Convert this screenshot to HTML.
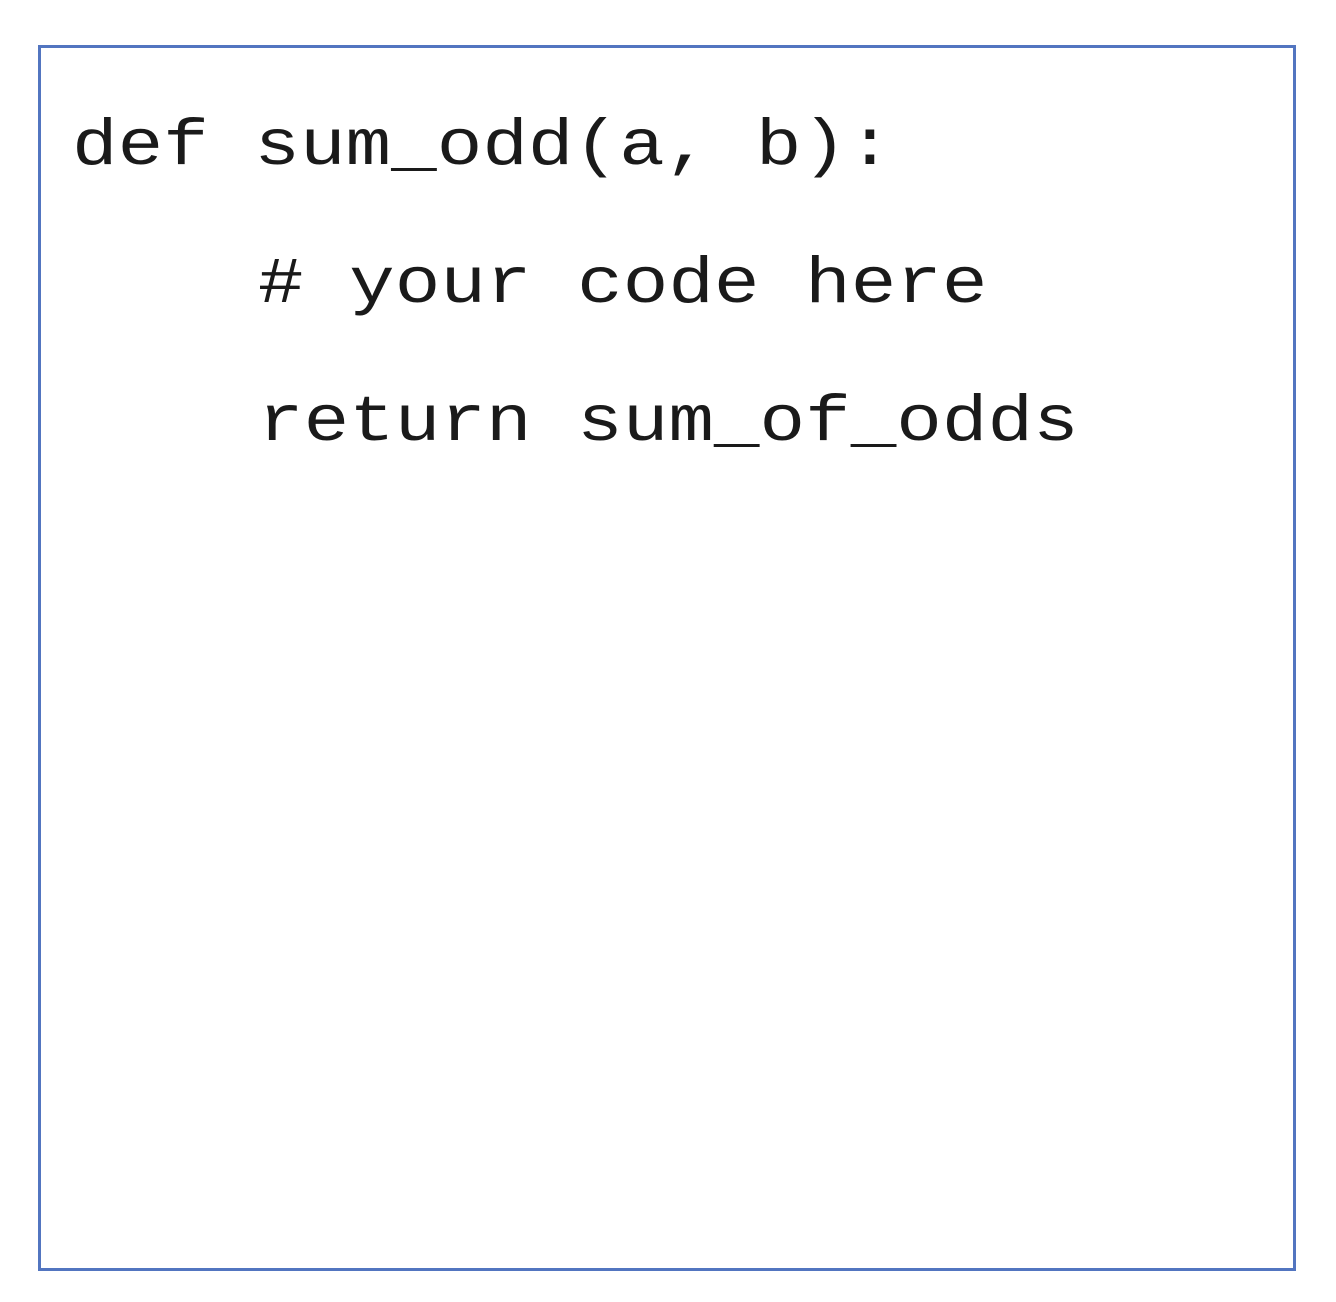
<!DOCTYPE html>
<html><head><style>
html,body{margin:0;padding:0;background:#fff;width:1336px;height:1302px;overflow:hidden}
</style></head><body>
<svg width="1336" height="1302" xmlns="http://www.w3.org/2000/svg">
<rect x="39.5" y="46.5" width="1255" height="1223" fill="#fff" stroke="#5275c0" stroke-width="3"/>
<g font-family="'Liberation Mono', monospace" font-size="76" fill="#1a1a1a" xml:space="preserve">
<text x="72" y="0" transform="translate(0,164) scale(1,0.86)">def sum_odd(a, b):</text>
<text x="258" y="0" transform="translate(0,302) scale(1,0.86)"># your code here</text>
<text x="258" y="0" transform="translate(0,440) scale(1,0.86)">return sum_of_odds</text>
</g>
</svg>
</body></html>
